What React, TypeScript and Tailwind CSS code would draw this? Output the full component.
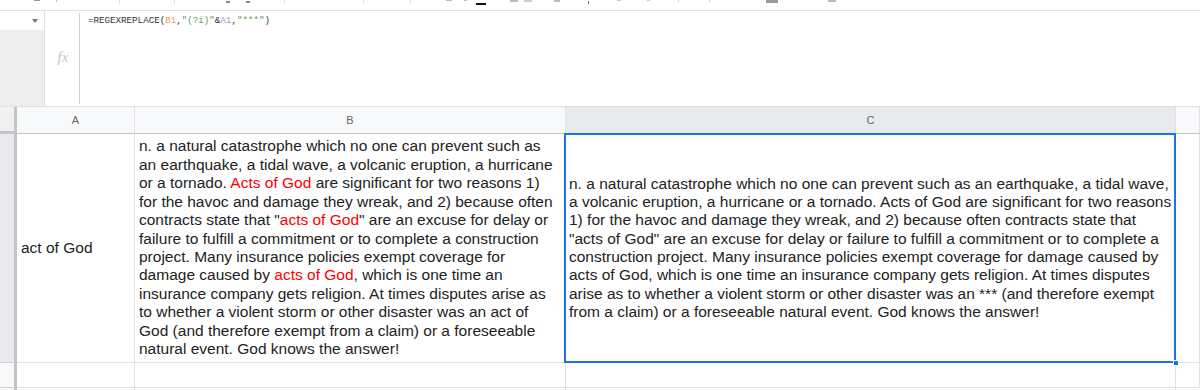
import React from "react";

const font = { fontFamily: '"Liberation Sans", Arial, sans-serif' };

const bLines: React.ReactNode[] = [
  "n. a natural catastrophe which no one can prevent such as",
  "an earthquake, a tidal wave, a volcanic eruption, a hurricane",
  <>or a tornado. <span className="text-[#ff0000]">Acts of God</span> are significant for two reasons 1)</>,
  "for the havoc and damage they wreak, and 2) because often",
  <>contracts state that "<span className="text-[#ff0000]">acts of God</span>" are an excuse for delay or</>,
  "failure to fulfill a commitment or to complete a construction",
  "project. Many insurance policies exempt coverage for",
  <>damage caused by <span className="text-[#ff0000]">acts of God</span>, which is one time an</>,
  "insurance company gets religion. At times disputes arise as",
  "to whether a violent storm or other disaster was an act of",
  "God (and therefore exempt from a claim) or a foreseeable",
  "natural event. God knows the answer!",
];

const cLines = [
  "n. a natural catastrophe which no one can prevent such as an earthquake, a tidal wave,",
  "a volcanic eruption, a hurricane or a tornado. Acts of God are significant for two reasons",
  "1) for the havoc and damage they wreak, and 2) because often contracts state that",
  "\"acts of God\" are an excuse for delay or failure to fulfill a commitment or to complete a",
  "construction project. Many insurance policies exempt coverage for damage caused by",
  "acts of God, which is one time an insurance company gets religion. At times disputes",
  "arise as to whether a violent storm or other disaster was an *** (and therefore exempt",
  "from a claim) or a foreseeable natural event. God knows the answer!",
];

function Toolbar() {
  // only the bottom sliver of the toolbar is visible
  return (
    <div className="h-[11px] border-b border-[#e0e0e0] flex items-start overflow-hidden">
      <span className="ml-[34px] mt-0 w-[6px] h-[1px] bg-[#999]" />
      <span className="ml-[16px] w-[1px] h-[2px] bg-[#bbb]" />
      <span className="ml-[62px] w-[1px] h-[4px] bg-[#e0e0e0]" />
      <span className="ml-[54px] w-[1px] h-[4px] bg-[#e0e0e0]" />
      <span className="ml-[51px] mt-[1px] w-[4px] h-[2px] bg-[#888]" />
      <span className="ml-[16px] mt-[1px] w-[4px] h-[2px] bg-[#888]" />
      <span className="ml-[34px] w-[1px] h-[4px] bg-[#e0e0e0]" />
      <span className="ml-[78px] w-[1px] h-[4px] bg-[#e0e0e0]" />
      <span className="ml-[46px] w-[1px] h-[4px] bg-[#e0e0e0]" />
      <span className="ml-[35px] w-[6px] h-[1px] bg-[#bbb]" />
      <span className="ml-[12px] w-[3px] h-[1px] bg-[#bbb]" />
      <span className="ml-[9px] mt-[3px] w-[10px] h-[2px] bg-[#111]" />
      <span className="ml-[24px] w-[8px] h-[2px] bg-[#bbb]" />
      <span className="ml-[6px] w-[8px] h-[2px] bg-[#ccc]" />
      <span className="ml-[22px] w-[6px] h-[2px] bg-[#bbb]" />
      <span className="ml-[28px] mt-[1px] w-[1px] h-[3px] bg-[#777]" />
      <span className="ml-[28px] w-[4px] h-[1px] bg-[#ccc]" />
      <span className="ml-[26px] w-[3px] h-[1px] bg-[#ccc]" />
      <span className="ml-[28px] w-[1px] h-[2px] bg-[#ccc]" />
      <span className="ml-[30px] w-[1px] h-[2px] bg-[#ccc]" />
      <span className="ml-[56px] w-[12px] h-[3px] bg-[#999]" />
      <span className="ml-[50px] w-[8px] h-[2px] bg-[#bbb]" />
    </div>
  );
}

function FormulaBar() {
  return (
    <div className="h-[96px] flex border-b border-[#e0e0e0]">
      <div className="w-[45px] flex flex-col border-r border-[#e0e0e0]">
        <div className="h-[19px] bg-white flex items-center justify-end pr-[6px]">
          <svg width="6" height="4" viewBox="0 0 6 4">
            <path d="M0 0h6L3 4z" fill="#777" />
          </svg>
        </div>
        <div className="flex-1 bg-[#eeeeee]" />
      </div>
      <div className="w-[34px] flex items-center justify-center py-[2px]">
        <span className="text-[15px] italic text-[#c4c4c4] pl-[2px] mt-[-2px]" style={{ fontFamily: '"Liberation Serif", serif' }}>
          fx
        </span>
      </div>
      <div className="my-[2px] w-[1px] bg-[#d0d0d0]" />
      <div className="flex-1 pl-[8px] pt-[4px]">
        <div className="text-[9.2px] leading-[12px] text-[#333]" style={{ fontFamily: '"Liberation Mono", monospace' }}>
          =REGEXREPLACE(<span className="text-[#f0a060]">B1</span>,
          <span className="text-[#6a9a6a]">"(?i)"</span>&amp;<span className="text-[#9aa0bf]">A1</span>,
          <span className="text-[#6a9a6a]">"***"</span>)
        </div>
      </div>
    </div>
  );
}

function Grid() {
  const line = "border-r border-b border-[#e2e2e2]";
  const hdr = "flex items-center justify-center text-[11px] text-[#666] " + line;
  return (
    <div
      className="grid grid-cols-[17px_118px_431px_610px_1fr] grid-rows-[27px_229px_25px_1fr] flex-1 relative"
      style={font}
    >
      <div className="bg-[#f1f1f1] border-r-[3px] border-b-[3px] border-[#c4c4c4]" />
      <div className={"bg-[#f8f9fa] border-b-[#c4c4c4] " + hdr}>A</div>
      <div className={"bg-[#f8f9fa] border-b-[#c4c4c4] " + hdr}>B</div>
      <div className={"bg-[#e8eaed] border-b-[#c4c4c4] " + hdr}>C</div>
      <div className={"bg-[#f8f9fa] border-b-[#c4c4c4] " + hdr}></div>

      {/* row 1 */}
      <div className="bg-[#e8eaed] border-r-[3px] border-b border-r-[#c4c4c4] border-b-[#d0d0d0]" />
      <div className={"flex items-center pl-[4px] text-[15.5px] text-[#222] " + line}>act of God</div>
      <div className={"flex flex-col justify-center pl-[4px] text-[15.5px] leading-[18.45px] text-[#222] whitespace-nowrap " + line}>
        {bLines.map((l, i) => (
          <div key={i}>{l}</div>
        ))}
      </div>
      <div className={"relative flex flex-col justify-center pl-[3px] text-[15.5px] leading-[18.3px] text-[#222] whitespace-nowrap " + line}>
        {cLines.map((l, i) => (
          <div key={i}>{l}</div>
        ))}
        <div className="absolute left-[-2px] top-[-1px] right-[-1px] bottom-[-1px] border-2 border-[#1a73e8]" />
        <div className="absolute right-[-4px] bottom-[-4px] w-[6px] h-[6px] bg-[#1a73e8] border border-white" />
      </div>
      <div className={line} />

      {/* row 2 */}
      <div className="bg-[#f8f9fa] border-r-[3px] border-b border-r-[#c4c4c4] border-b-[#d0d0d0]" />
      <div className={line} />
      <div className={line} />
      <div className={line} />
      <div className={line} />

      {/* row 3 */}
      <div className="bg-[#f8f9fa] border-r-[3px] border-r-[#c4c4c4]" />
      <div className="border-r border-[#e2e2e2]" />
      <div className="border-r border-[#e2e2e2]" />
      <div className="border-r border-[#e2e2e2]" />
      <div />
    </div>
  );
}

export default function App() {
  return (
    <div className="w-[1200px] h-[390px] bg-white overflow-hidden flex flex-col">
      <Toolbar />
      <FormulaBar />
      <Grid />
    </div>
  );
}
